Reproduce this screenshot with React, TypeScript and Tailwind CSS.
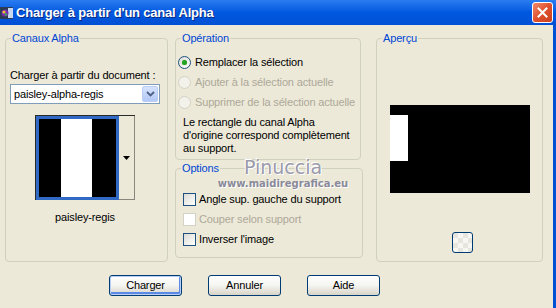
import React from 'react';

const font = "font-['Tahoma','Liberation_Sans',sans-serif] tracking-[-0.15px]";

function Radio({ label, checked, disabled }: { label: string; checked?: boolean; disabled?: boolean }) {
  return (
    <div className="flex h-[20px] items-center whitespace-nowrap pl-[2px]">
      <span
        className={
          'flex h-[13px] w-[13px] shrink-0 items-center justify-center rounded-full border ' +
          (disabled ? 'border-[#d4d2c6] bg-[#f2f1ea]' : 'border-[#1c5180] bg-linear-to-br from-[#dcdcd6] to-white')
        }
      >
        {checked && <span className="h-[5px] w-[5px] rounded-full bg-[#21a121] shadow-[0_0_1px_#7ad07a]" />}
      </span>
      <span className={'ml-[4px] text-[11px] ' + (disabled ? 'text-[#aca899]' : 'text-black')}>{label}</span>
    </div>
  );
}

function Check({ label, disabled }: { label: string; disabled?: boolean }) {
  return (
    <div className="flex h-[20px] items-center whitespace-nowrap pl-[7px]">
      <span
        className={
          'h-[13px] w-[13px] shrink-0 border ' +
          (disabled ? 'border-[#d4d2c6] bg-white' : 'border-[#1c5180] bg-linear-to-br from-[#dcdcd6] to-white')
        }
      />
      <span className={'ml-[3px] text-[11px] ' + (disabled ? 'text-[#aca899]' : 'text-black')}>{label}</span>
    </div>
  );
}

function Group({ title, className, children }: { title: string; className: string; children?: React.ReactNode }) {
  return (
    <fieldset className={'rounded-[4px] border border-[#d0d0bf] ' + className}>
      <legend className="ml-[5px] px-[1px] text-[11px] leading-[13px] text-[#0046d5]">{title}</legend>
      {children}
    </fieldset>
  );
}

function Btn({ label, main }: { label: string; main?: boolean }) {
  return (
    <button
      className={
        'flex h-[21px] w-[73px] items-center justify-center rounded-[3px] border border-[#003c74] bg-linear-to-b from-white via-[#f4f4f0] to-[#d8d4c8] text-[11px] text-black ' +
        (main ? 'shadow-[inset_0_0_0_1px_#b8d0f8,inset_-1px_-2px_0_1px_#5a8ae6]' : '')
      }
    >
      {label}
    </button>
  );
}

export default function App() {
  return (
    <div className={'flex h-[308px] w-[556px] flex-col overflow-hidden bg-[#ece9d8] ' + font}>
      {/* title bar */}
      <div className="flex h-[25px] shrink-0 items-center bg-linear-to-b from-[#2a7cf0] via-[#0058e0] to-[#0050d4]">
        <svg width="14" height="14" viewBox="0 0 14 14">
          <rect x="0" y="1" width="13" height="12" rx="1" fill="#2b3b52" />
          <rect x="8" y="2" width="5" height="10" fill="#c8d8f0" />
          <circle cx="5" cy="7" r="3.5" fill="#7a2ab0" />
          <circle cx="4" cy="6" r="1.6" fill="#e8c030" />
          <circle cx="6" cy="8.5" r="1.2" fill="#30b050" />
        </svg>
        <span className="ml-[2px] font-['Liberation_Sans',sans-serif] text-[13px] font-bold tracking-[-0.2px] text-white [text-shadow:1px_1px_0_#0a2a80]">
          Charger à partir d'un canal Alpha
        </span>
        <div className="ml-auto mr-[3px] flex h-[21px] w-[21px] items-center justify-center rounded-[3px] border border-white bg-linear-to-br from-[#f08a6a] via-[#e0502e] to-[#c8401e]">
          <svg width="11" height="11" viewBox="0 0 11 11">
            <path d="M1.5 1.5 L9.5 9.5 M9.5 1.5 L1.5 9.5" stroke="white" strokeWidth="2" strokeLinecap="square" />
          </svg>
        </div>
      </div>

      {/* body */}
      <div className="relative flex flex-1 flex-col border-r-[3px] border-[#0050d4]">
        <div className="mt-[7px] flex">
          <Group title="Canaux Alpha" className="ml-[5px] h-[230px] w-[163px]">
            <div className="px-[4px]">
              <div className="mt-[24px] whitespace-nowrap text-[11px] leading-[13px] text-black">Charger à partir du document :</div>
              <div className="mt-[2px] flex h-[20px] w-[150px] items-center border border-[#7f9db9] bg-white pl-[3px]">
                <span className="text-[11px] text-black">paisley-alpha-regis</span>
                <div className="ml-auto mr-[1px] flex h-[16px] w-[16px] items-center justify-center rounded-[2px] border border-[#b9cdf5] bg-linear-to-b from-[#d6e3fd] to-[#b4c8f6]">
                  <svg width="9" height="6" viewBox="0 0 9 6">
                    <path d="M1 1 L4.5 4.5 L8 1" fill="none" stroke="#4d6185" strokeWidth="1.8" />
                  </svg>
                </div>
              </div>
              <div className="ml-[25px] mt-[11px] flex w-[100px] flex-col items-center">
                <div className="flex h-[85px] w-[100px] border-l border-t border-[#2a2a2a]">
                  <div className="flex h-[84px] w-[83px] border-[3px] border-[#316ac5]">
                    <div className="w-[22px] bg-black" />
                    <div className="w-[31px] bg-white" />
                    <div className="flex-1 bg-black" />
                  </div>
                  <div className="flex flex-1 items-center justify-center border-b border-r border-[#8a887c] bg-[#ece9d8]">
                    <svg width="7" height="4" viewBox="0 0 7 4">
                      <path d="M0 0 H7 L3.5 4 Z" fill="black" />
                    </svg>
                  </div>
                </div>
                <div className="mt-[11px] text-[11px] leading-[13px] text-black">paisley-regis</div>
              </div>
            </div>
          </Group>

          <div className="ml-[7px] flex w-[188px] flex-col">
            <Group title="Opération" className="h-[128px] w-[186px]">
              <div className="mt-[7px]">
                <Radio label="Remplacer la sélection" checked />
                <Radio label="Ajouter à la sélection actuelle" disabled />
                <Radio label="Supprimer de la sélection actuelle" disabled />
              </div>
              <p className="mt-[4px] whitespace-nowrap pl-[7px] text-[11px] leading-[13px] text-black">
                Le rectangle du canal Alpha
                <br />
                d'origine correspond complètement
                <br />
                au support.
              </p>
            </Group>
            <Group title="Options" className="mt-[2px] h-[96px] w-[188px]">
              <div className="mt-[14px]">
                <Check label="Angle sup. gauche du support" />
                <Check label="Couper selon support" disabled />
                <Check label="Inverser l'image" />
              </div>
            </Group>
          </div>

          <Group title="Aperçu" className="ml-[13px] h-[230px] w-[167px]">
            <div className="ml-[13px] mt-[60px] h-[88px] w-[140px] bg-black pt-[10px]">
              <div className="h-[46px] w-[18px] bg-white" />
            </div>
            <div className="ml-[75px] mt-[39px] h-[21px] w-[21px] rounded-[3px] border border-[#003c74] bg-[repeating-conic-gradient(#f6f6f2_0_25%,#e6e6de_0_50%)] bg-[length:10px_10px]" />
          </Group>
        </div>

        <div className="mt-[13px] flex">
          <div className="ml-[109px]">
            <Btn label="Charger" main />
          </div>
          <div className="ml-[26px]">
            <Btn label="Annuler" />
          </div>
          <div className="ml-[26px]">
            <Btn label="Aide" />
          </div>
        </div>

        {/* watermark */}
        <div className="pointer-events-none absolute left-[222px] top-[131px] flex w-[122px] flex-col items-center">
          <span className="font-['DejaVu_Sans',sans-serif] text-[19px] leading-[22px] tracking-[0px] text-[#9a9aaa] [text-shadow:1px_1px_0_#ffffff,-1px_-1px_0_#ffffff]">
            Pinuccia
          </span>
          <span className="font-['DejaVu_Sans',sans-serif] text-[10px] font-semibold leading-[12px] tracking-[0px] text-[#8a8a9a] [text-shadow:1px_1px_0_#ffffff]">
            www.maidiregrafica.eu
          </span>
        </div>
      </div>
    </div>
  );
}
